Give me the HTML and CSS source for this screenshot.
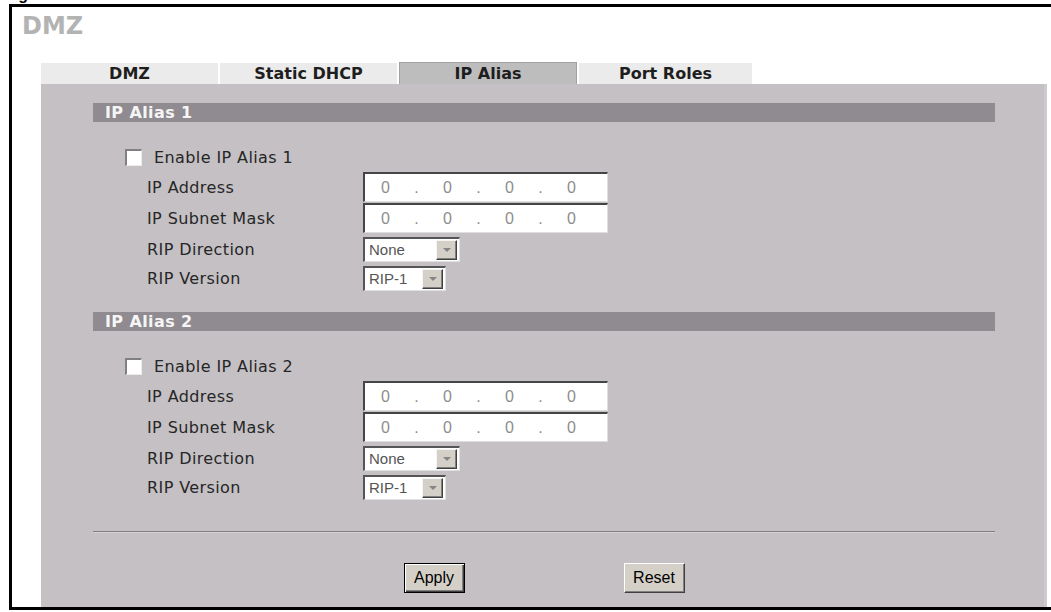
FILE: index.html
```html
<!DOCTYPE html>
<html>
<head>
<meta charset="utf-8">
<title>DMZ - IP Alias</title>
<link rel="stylesheet" href="styles.css">
</head>
<body>
<div class="caption"><span>Figure</span></div>
<div class="frame">
  <div class="title">DMZ</div>
  <div class="tabs">
    <div class="tab t1">DMZ</div>
    <div class="tab t2">Static DHCP</div>
    <div class="tab t3 active">IP Alias</div>
    <div class="tab t4">Port Roles</div>
  </div>
  <div class="panel">
    <section class="sec">
      <div class="sec-head">IP Alias 1</div>
      <div class="row row-check"><span class="cb"></span><span>Enable IP Alias 1</span></div>
      <div class="row row-ip"><span class="lbl">IP Address</span>
        <div class="ip"><span>0</span><span>.</span><span>0</span><span>.</span><span>0</span><span>.</span><span>0</span></div>
      </div>
      <div class="row row-ip"><span class="lbl">IP Subnet Mask</span>
        <div class="ip"><span>0</span><span>.</span><span>0</span><span>.</span><span>0</span><span>.</span><span>0</span></div>
      </div>
      <div class="row row-sel"><span class="lbl">RIP Direction</span>
        <div class="sel sel-dir"><span>None</span><span class="sel-btn"><svg width="8" height="4" viewBox="0 0 8 4"><path d="M0 0H8L4 4Z" fill="#858585"/></svg></span></div>
      </div>
      <div class="row row-sel"><span class="lbl">RIP Version</span>
        <div class="sel sel-ver"><span>RIP-1</span><span class="sel-btn"><svg width="8" height="4" viewBox="0 0 8 4"><path d="M0 0H8L4 4Z" fill="#858585"/></svg></span></div>
      </div>
    </section>
    <section class="sec">
      <div class="sec-head">IP Alias 2</div>
      <div class="row row-check"><span class="cb"></span><span>Enable IP Alias 2</span></div>
      <div class="row row-ip"><span class="lbl">IP Address</span>
        <div class="ip"><span>0</span><span>.</span><span>0</span><span>.</span><span>0</span><span>.</span><span>0</span></div>
      </div>
      <div class="row row-ip"><span class="lbl">IP Subnet Mask</span>
        <div class="ip"><span>0</span><span>.</span><span>0</span><span>.</span><span>0</span><span>.</span><span>0</span></div>
      </div>
      <div class="row row-sel"><span class="lbl">RIP Direction</span>
        <div class="sel sel-dir"><span>None</span><span class="sel-btn"><svg width="8" height="4" viewBox="0 0 8 4"><path d="M0 0H8L4 4Z" fill="#858585"/></svg></span></div>
      </div>
      <div class="row row-sel"><span class="lbl">RIP Version</span>
        <div class="sel sel-ver"><span>RIP-1</span><span class="sel-btn"><svg width="8" height="4" viewBox="0 0 8 4"><path d="M0 0H8L4 4Z" fill="#858585"/></svg></span></div>
      </div>
    </section>
    <div class="sep"></div>
    <div class="buttons">
      <button class="btn btn-default">Apply</button>
      <button class="btn">Reset</button>
    </div>
  </div>
</div>
</body>
</html>
```

FILE: styles.css
```css
body {
  margin: 0;
  background: #fff;
  font-family: "DejaVu Sans", Verdana, sans-serif;
}

.caption {
  height: 4px;
  overflow: hidden;
  padding-left: 4px;
}
.caption span {
  display: block;
  margin-top: -13px;
  font: bold 16px/16px "Liberation Sans", Arial, sans-serif;
  color: #000;
}

.frame {
  margin-left: 9px;
  border-top: 3px solid #000;
  border-left: 3px solid #000;
  border-bottom: 3px solid #000;
}

.title {
  margin: 5px 0 0 10px;
  font: bold 24px/28px "DejaVu Sans", Verdana, sans-serif;
  color: #b3b3b3;
}

.tabs {
  display: flex;
  gap: 2px;
  margin: 23px 0 0 29px;
  height: 21px;
  align-items: flex-end;
}
.tab {
  box-sizing: border-box;
  height: 21px;
  background: #ebebeb;
  font: bold 16px/21px "DejaVu Sans", Verdana, sans-serif;
  text-align: center;
  color: #1e1e1e;
}
.t1 { width: 177px; }
.t2 { width: 177px; }
.t3 { width: 178px; }
.t4 { width: 173px; }
.tab.active {
  height: 22px;
  background: #bdbdbd;
  border: 1px solid #a2a2a2;
  border-bottom: none;
  line-height: 21px;
}

.panel {
  margin: 0 4px 0 29px;
  background: #c4c0c4;
  border-right: 3px solid #cdcacd;
  padding: 19px 49px 14px 52px;
}

.sec + .sec {
  margin-top: 21px;
}
.sec-head {
  height: 19px;
  padding-left: 12px;
  background: #8f8b90;
  color: #f5f5f5;
  font: bold 16px/19px "DejaVu Sans", Verdana, sans-serif;
  letter-spacing: 0.4px;
}

.row {
  display: flex;
  align-items: center;
  font-size: 16px;
  letter-spacing: 0.4px;
  color: #262626;
}
.row-check {
  height: 30px;
  margin-top: 20px;
  padding-left: 32px;
}
.row-ip {
  height: 30px;
}
.row-ip + .row-ip {
  margin-top: 1px;
}
.row-sel {
  height: 26px;
  margin-top: 3px;
}
.lbl {
  flex-shrink: 0;
  width: 216px;
  padding-left: 54px;
}

.cb {
  flex-shrink: 0;
  box-sizing: border-box;
  width: 17px;
  height: 17px;
  margin-right: 12px;
  background: #fff;
  border-top: 2px solid #808080;
  border-left: 2px solid #808080;
  border-right: 1px solid #ececec;
  border-bottom: 1px solid #ececec;
}

.ip {
  box-sizing: border-box;
  width: 245px;
  height: 30px;
  display: flex;
  align-items: center;
  padding-left: 5px;
  background: #fff;
  border-top: 2px solid #454545;
  border-left: 2px solid #454545;
  border-right: 1px solid #dedede;
  border-bottom: 1px solid #dedede;
  font: 16px "Liberation Sans", Arial, sans-serif;
  color: #8d8d8d;
  letter-spacing: 0;
}
.ip span {
  width: 31px;
  text-align: center;
}

.sel {
  box-sizing: border-box;
  height: 25px;
  display: flex;
  align-items: center;
  justify-content: space-between;
  padding: 1px 2px 1px 4px;
  background: #fff;
  border-top: 2px solid #555;
  border-left: 2px solid #555;
  border-right: 1px solid #e0e0e0;
  border-bottom: 1px solid #e0e0e0;
  font: 15px "Liberation Sans", Arial, sans-serif;
  color: #555;
  letter-spacing: 0;
}
.sel-dir { width: 97px; }
.sel-ver { width: 83px; }
.sel-btn {
  box-sizing: border-box;
  width: 21px;
  height: 20px;
  display: flex;
  align-items: center;
  justify-content: center;
  background: #d4d0c8;
  border-top: 1px solid #f4f4f4;
  border-left: 1px solid #f4f4f4;
  border-right: 1px solid #404040;
  border-bottom: 1px solid #404040;
  box-shadow: inset -1px -1px #808080;
}

.sep {
  margin-top: 31px;
  border-top: 1px solid #7f7c80;
  border-bottom: 1px solid #d6d3d6;
}

.buttons {
  display: flex;
  justify-content: center;
  gap: 159px;
  margin-top: 30px;
}
.btn {
  box-sizing: border-box;
  width: 61px;
  height: 30px;
  padding: 0;
  background: #d4d0c8;
  font: 16px "Liberation Sans", Arial, sans-serif;
  color: #000;
  border-top: 1px solid #fff;
  border-left: 1px solid #fff;
  border-right: 1px solid #404040;
  border-bottom: 1px solid #404040;
  box-shadow: inset -1px -1px #808080;
}
.btn-default {
  border: 1px solid #000;
  box-shadow: inset 1px 1px #fff, inset -1px -1px #404040, inset -2px -2px #808080;
}
```
